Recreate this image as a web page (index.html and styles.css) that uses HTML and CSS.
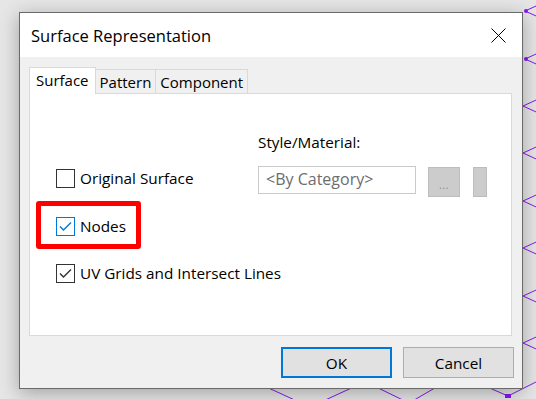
FILE: index.html
```html
<!DOCTYPE html>
<html lang="en">
<head>
    <meta charset="UTF-8">
    <meta name="viewport" content="width=device-width, initial-scale=1.0">
    <title>Surface Representation</title>
    <link rel="stylesheet" href="styles.css">
</head>
<body>

<!-- Model view behind the dialog -->
<svg class="canvas" width="536" height="399" viewBox="0 0 536 399">
  <g stroke="#8a16f2" stroke-width="1" fill="none">
    <path d="M525 11 L545 2 M525 11 L545 20"/>
    <path d="M525 59 L545 50 M525 59 L545 68"/>
    <path d="M523 106 L545 96 M523 106 L545 116"/>
    <path d="M523 153 L545 143 M523 153 L545 163"/>
    <path d="M523 201 L545 191 M523 201 L545 211"/>
    <path d="M523 248 L545 238 M523 248 L545 258"/>
    <path d="M523 296 L545 286 M523 296 L545 306"/>
    <path d="M523 343 L545 333 M523 343 L545 353"/>
    <path d="M262 385 L310 407 L358 385"/>
    <path d="M372 385 L409 403 L440 385"/>
    <path d="M485 386 L508 396 L540 380"/>
  </g>
  <g fill="#8a16f2">
    <circle cx="526" cy="11" r="2"/>
    <circle cx="526" cy="59" r="2"/>
    <rect x="505" y="394" width="6" height="4"/>
  </g>
</svg>

<!-- Dialog -->
<div class="dialog">
  <div class="titlebar">
    <span class="title">Surface Representation</span>
    <svg class="close" width="15" height="15" viewBox="0 0 15 15">
      <path d="M0.5 0.5 L14.5 14.5 M14.5 0.5 L0.5 14.5" stroke="#000" stroke-width="1"/>
    </svg>
  </div>

  <div class="dialog-body">
    <div class="tabs">
      <div class="tab active">Surface</div>
      <div class="tab">Pattern</div>
      <div class="tab">Component</div>
    </div>

    <div class="panel">
      <div class="options">
        <div class="check-row">
          <span class="box"></span>
          <span>Original Surface</span>
        </div>
        <div class="check-row highlighted">
          <span class="box blue">
            <svg width="17" height="17" viewBox="0 0 17 17"><polyline points="3,8.5 6.5,12 14,4.5" fill="none" stroke="#0078d7" stroke-width="1.4"/></svg>
          </span>
          <span>Nodes</span>
        </div>
        <div class="check-row">
          <span class="box">
            <svg width="17" height="17" viewBox="0 0 17 17"><polyline points="3,8.5 6.5,12 14,4.5" fill="none" stroke="#333" stroke-width="1.4"/></svg>
          </span>
          <span>UV Grids and Intersect Lines</span>
        </div>
      </div>

      <div class="material">
        <div class="material-label">Style/Material:</div>
        <div class="material-row">
          <div class="field">&lt;By Category&gt;</div>
          <div class="btn-browse">...</div>
          <div class="btn-narrow"></div>
        </div>
      </div>
    </div>

    <div class="footer">
      <div class="btn default">OK</div>
      <div class="btn">Cancel</div>
    </div>
  </div>
</div>

</body>
</html>
```

FILE: styles.css
```css
html, body {
  margin: 0;
  width: 100%;
  height: 100%;
}

body {
  position: relative;
  overflow: hidden;
  box-sizing: border-box;
  padding: 12px 0 0 19px;
  background: #e6e6e6;
  font-family: "Segoe UI", "Open Sans", sans-serif;
  font-size: 15.3px;
  color: #000;
}

.canvas {
  position: absolute;
  top: 0;
  left: 0;
}

/* Dialog window */
.dialog {
  position: relative;
  width: 504px;
  height: 377px;
  box-sizing: border-box;
  border: 1px solid #6a6a6a;
  background: #f0f0f0;
  box-shadow: 0 4px 18px rgba(0, 0, 0, 0.3);
}

.titlebar {
  height: 44px;
  background: #fff;
  display: flex;
  align-items: center;
  justify-content: space-between;
  padding: 0 16px 0 11px;
}

.title {
  font-size: 16.5px;
  margin-top: 1px;
}

.close {
  display: block;
  margin-top: 1px;
}

.dialog-body {
  padding: 10px 10px 0 9px;
}

/* Tabs */
.tabs {
  display: flex;
  align-items: flex-end;
  height: 27px;
  margin-bottom: -1px;
  position: relative;
  z-index: 1;
  font-size: 15px;
}

.tab {
  height: 25px;
  box-sizing: border-box;
  display: flex;
  align-items: center;
  padding: 1px 4px 0 4px;
  border: 1px solid #d9d9d9;
  background: #f0f0f0;
  margin-left: -1px;
}

.tab:first-child {
  margin-left: 0;
}

.tab.active {
  height: 27px;
  padding: 0 6px 2px 6px;
  border-bottom: none;
  background: #fff;
}

.tab.active + .tab {
  border-left: none;
  margin-left: 0;
}

/* Tab panel */
.panel {
  height: 243px;
  box-sizing: border-box;
  border: 1px solid #d9d9d9;
  background: #fff;
  display: flex;
  padding-left: 26px;
}

.options {
  width: 202px;
  padding-top: 74px;
}

.check-row {
  position: relative;
  display: flex;
  align-items: center;
  gap: 5px;
  height: 20px;
  white-space: nowrap;
  margin-bottom: 28px;
}

.check-row + .check-row + .check-row {
  margin-top: -1px;
}

.box {
  width: 19px;
  height: 19px;
  box-sizing: border-box;
  border: 1px solid #333;
  background: #fff;
  display: flex;
  align-items: center;
  justify-content: center;
  flex: none;
}

.box.blue {
  border-color: #0078d7;
}

/* Red annotation around the Nodes option */
.highlighted::before {
  content: '';
  position: absolute;
  left: -20px;
  top: -15px;
  width: 105px;
  height: 48px;
  box-sizing: border-box;
  border: 5px solid #ff0000;
  border-radius: 3px;
}

.material {
  padding-top: 38px;
}

.material-label {
  line-height: 20px;
  height: 20px;
}

.material-row {
  display: flex;
  align-items: flex-start;
  margin-top: 14px;
}

.field {
  width: 158px;
  height: 28px;
  box-sizing: border-box;
  border: 1px solid #cacaca;
  padding-left: 7px;
  line-height: 25px;
  font-size: 16px;
  color: #6d6d6d;
}

.btn-browse {
  width: 32px;
  height: 30px;
  box-sizing: border-box;
  margin: 1px 0 0 12px;
  border: 1px solid #bdbdbd;
  background: #cccccc;
  color: #8c8c8c;
  font-size: 11px;
  text-align: center;
  line-height: 34px;
  letter-spacing: 0.5px;
}

.btn-narrow {
  width: 14px;
  height: 30px;
  box-sizing: border-box;
  margin: 1px 0 0 13px;
  border: 1px solid #bdbdbd;
  background: #cccccc;
}

/* Footer buttons */
.footer {
  display: flex;
  justify-content: flex-end;
  gap: 11px;
  padding-top: 11px;
  margin-right: -2px;
}

.btn {
  width: 111px;
  height: 31px;
  box-sizing: border-box;
  border: 1px solid #adadad;
  background: #e1e1e1;
  display: flex;
  align-items: center;
  justify-content: center;
}

.btn.default {
  border: 2px solid #0078d7;
}
```
